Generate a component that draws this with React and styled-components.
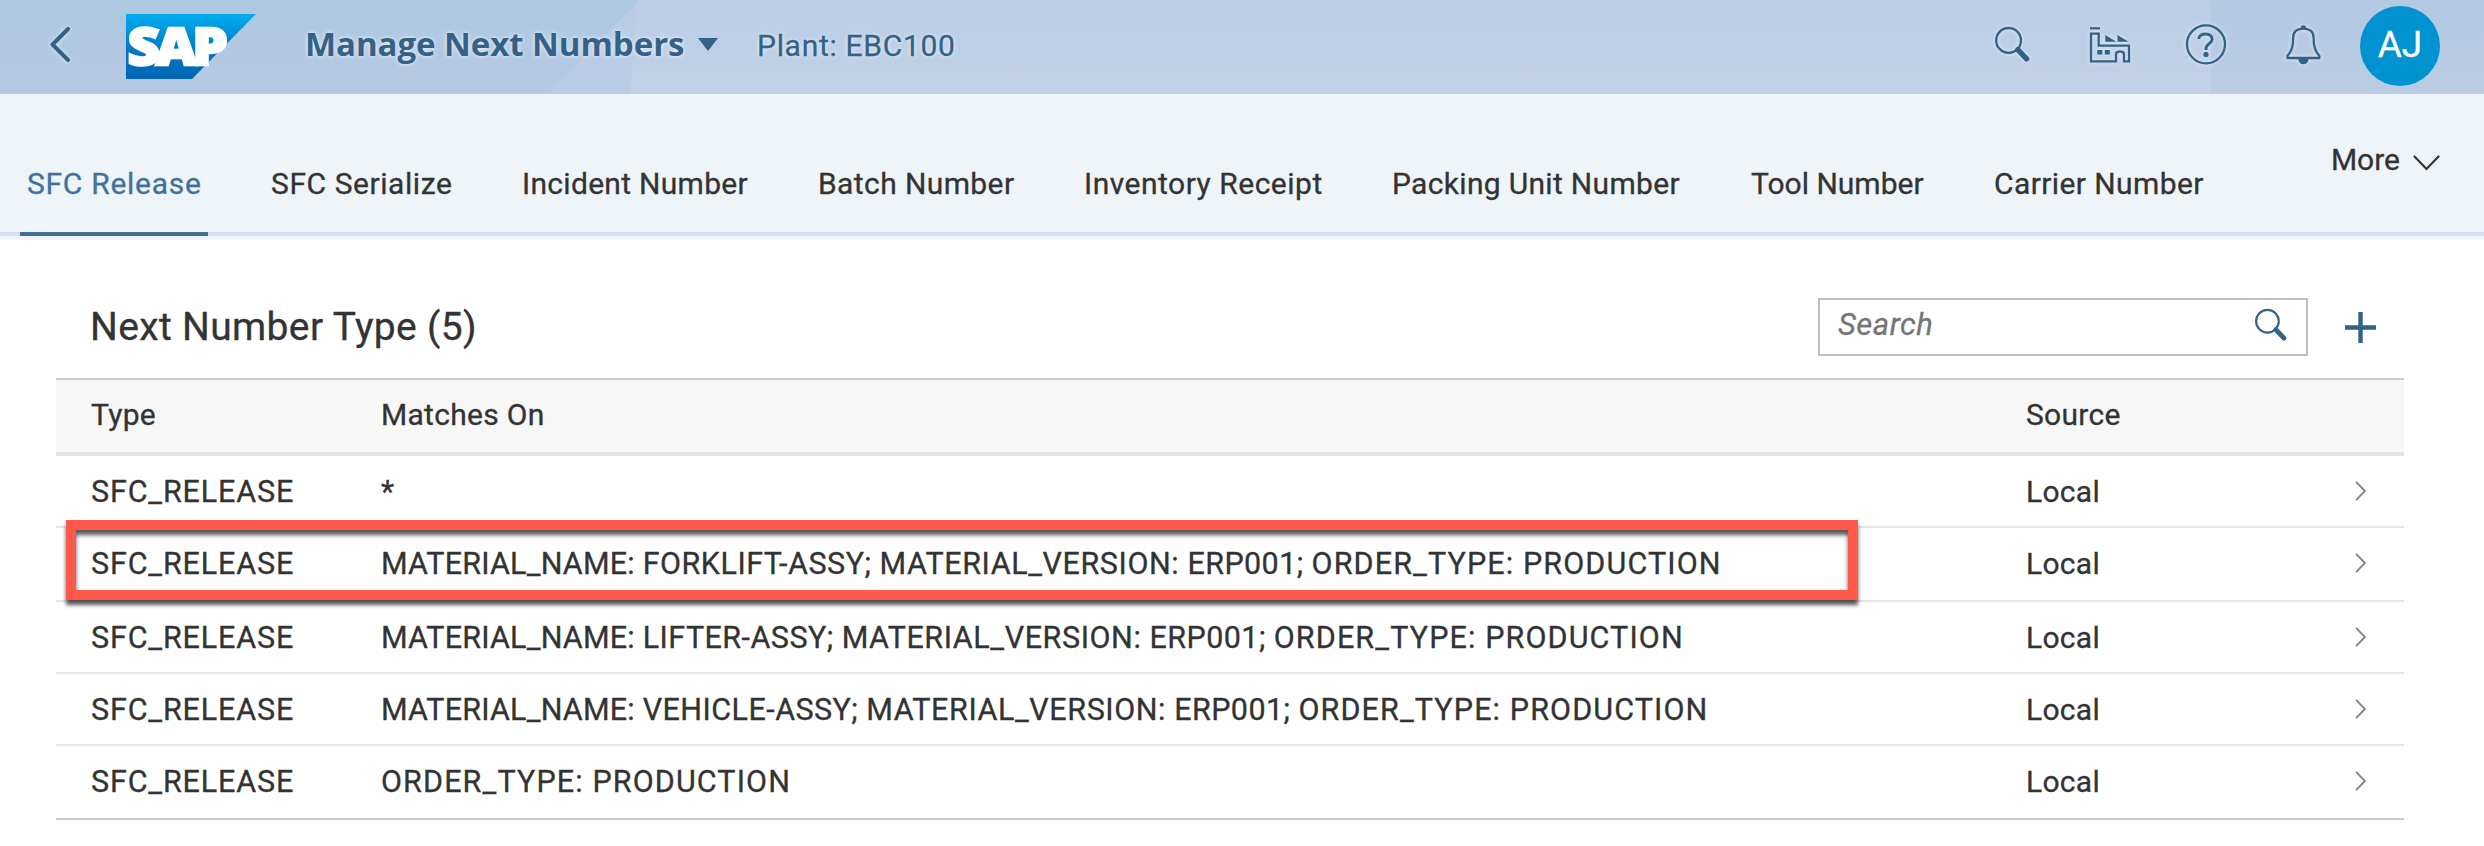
import React from "react";
import styled, { createGlobalStyle } from "styled-components";

const GlobalStyle = createGlobalStyle`
  body {
    margin: 0;
    background: #fff;
    color: #333;
    font-family: Roboto, "Liberation Sans", sans-serif;
    font-size: 30px;
    line-height: 36px;
    -webkit-text-stroke: 0.3px currentColor;
  }
  * { box-sizing: border-box; }
`;

const Page = styled.div`
  width: 2484px;
  height: 846px;
  overflow: hidden;
  display: flex;
  flex-direction: column;
`;

const ShellBar = styled.header`
  position: relative;
  isolation: isolate;
  flex: none;
  height: 94px;
  display: flex;
  align-items: flex-start;
  justify-content: space-between;
  color: #346187;
`;

const Backdrop = styled.svg`
  position: absolute;
  inset: 0;
  z-index: -1;
`;

const ShellGroup = styled.div`
  display: flex;
  align-items: flex-start;
`;

const Glyph = styled.svg`
  display: block;
  flex: none;
  overflow: visible;
  margin: ${(p) => p.$m || 0};
  fill: none;
  stroke: currentColor;
  filter: ${(p) => (p.$halo ? "drop-shadow(0 0 2px rgba(255,255,255,.7))" : "none")};
`;

const Logo = styled.svg`
  display: block;
  overflow: visible;
  margin: 14px 0 0 56px;
`;

const Heading = styled.div`
  display: flex;
  align-items: baseline;
  margin-left: 49px;
  height: 86px;
  line-height: 86px;
  text-shadow: 0 0 4px rgba(255, 255, 255, 0.9);
`;

const AppTitle = styled.h1`
  margin: 0;
  width: 393px;
  font: 700 33px/87px "Open Sans", sans-serif;
  -webkit-text-stroke: 0;
  letter-spacing: -0.05px;
  white-space: nowrap;
`;

const Caret = styled.svg`
  align-self: flex-start;
  margin-top: 38px;
`;

const Plant = styled.span`
  margin-left: 39px;
  letter-spacing: 0.7px;
`;

const Avatar = styled.div`
  width: 80px;
  height: 80px;
  margin: 6px 44px 0 39px;
  border-radius: 50%;
  background: #0092d1;
  color: #fff;
  font-size: 37px;
  line-height: 78px;
  text-align: center;
`;

const TabBar = styled.nav`
  flex: none;
  height: 146px;
  display: flex;
  justify-content: space-between;
  padding: 0 44px 0 20px;
  background: linear-gradient(#eff4f8 138px, #d3e0ef 138px, #d3e0ef 142px, #eff4f8 142px);
`;

const Tabs = styled.div`
  display: flex;
  gap: 56px;
`;

const Tab = styled.div`
  width: ${(p) => p.$w}px;
  height: 142px;
  padding: 72px 0 0 7px;
  white-space: nowrap;
  letter-spacing: ${(p) => p.$ls}px;
  color: ${(p) => (p.$active ? "#3f719c" : "#333")};
  border-bottom: 4px solid ${(p) => (p.$active ? "#3f6f9b" : "transparent")};
`;

const More = styled.div`
  display: flex;
  align-items: flex-start;
  padding-top: 48px;
`;

const Content = styled.main`
  padding: 0 80px 0 56px;
`;

const Toolbar = styled.div`
  height: 138px;
  padding: 58px 28px 22px 34px;
  display: flex;
  align-items: center;
`;

const TableTitle = styled.h2`
  margin: 0;
  flex: 1;
  font-size: 39px;
  font-weight: 400;
  line-height: 58px;
  letter-spacing: 0.35px;
`;

const SearchField = styled.div`
  width: 490px;
  height: 58px;
  display: flex;
  justify-content: space-between;
  align-items: flex-start;
  border: 2px solid #bfbfbf;
  padding: 7px 19px 0 18px;
  margin-right: 37px;
  color: #346187;
`;

const Placeholder = styled.span`
  font-style: italic;
  color: #757575;
  font-size: 31px;
  letter-spacing: 0.5px;
`;

const Table = styled.div`
  position: relative;
  border-top: 2px solid #ccc;
`;

const Row = styled.div`
  display: grid;
  grid-template-columns: 290px 1645px 1fr 38px;
  height: ${(p) => p.$h}px;
  padding: 18px 0 0 35px;
  border-bottom: 2px solid ${(p) => (p.$last ? "#ccc" : "#e5e5e5")};
`;

const HeadRow = styled(Row)`
  padding-top: 17px;
  background: #f7f7f7;
  border-bottom: 4px solid #e5e5e5;
`;

const Cell = styled.div`
  white-space: nowrap;
  letter-spacing: 0.3px;
`;

const Part = styled.span`
  font-size: 30.5px;
  letter-spacing: ${(p) => p.$ls}px;
`;

const Marker = styled.div`
  position: absolute;
  top: 140px;
  left: 10px;
  width: 1792px;
  height: 80px;
  border: 10px solid #ff594c;
  box-shadow: 0 5px 4px rgba(0, 0, 0, 0.66), inset 0 5px 4px rgba(0, 0, 0, 0.66);
`;

const TABS = [
  { label: "SFC Release", ls: 0.72, active: true },
  { label: "SFC Serialize", ls: 0.57 },
  { label: "Incident Number", ls: 0.3 },
  { label: "Batch Number", ls: 0.4 },
  { label: "Inventory Receipt", ls: 0.5 },
  { label: "Packing Unit Number", ls: 0.32 },
  { label: "Tool Number", ls: 0 },
  { label: "Carrier Number", ls: 0.4 },
];

const TAB_WIDTHS = [188, 195, 240, 210, 252, 303, 187, 220];

const NAME = ["MATERIAL_NAME: ", 0.2];
const VERSION = ["MATERIAL_VERSION: ", 0.58];
const ERP = ["ERP001; ", 0.42];
const ORDER = ["ORDER_TYPE: PRODUCTION", 1.12];
const ROWS = [
  { h: 72, parts: [["*", 0]] },
  { h: 74, parts: [NAME, ["FORKLIFT-ASSY; ", 0.5], VERSION, ERP, ORDER] },
  { h: 72, parts: [NAME, ["LIFTER-ASSY; ", 0.45], VERSION, ERP, ORDER] },
  { h: 72, parts: [NAME, ["VEHICLE-ASSY; ", 0.45], VERSION, ERP, ORDER] },
  { h: 74, parts: [ORDER] },
];

function SearchIcon({ size, ...rest }) {
  return (
    <Glyph width={size} height={size} viewBox="0 0 35 35" {...rest}>
      <circle cx="13.6" cy="13.4" r="12.4" strokeWidth="2.3" />
      <path d="M22.8 22.6L31.6 31.9" strokeWidth="5.4" strokeLinecap="round" />
    </Glyph>
  );
}

export default function App() {
  return (
    <Page>
      <GlobalStyle />
      <ShellBar>
        <Backdrop width="2484" height="94">
          <defs>
            <linearGradient id="base" x2="0" y2="1">
              <stop stopColor="#adc8e1" />
              <stop offset="1" stopColor="#b6c9e3" />
            </linearGradient>
            <linearGradient id="light" x2="0" y2="1">
              <stop stopColor="#b9cee6" />
              <stop offset="1" stopColor="#c1d1e7" />
            </linearGradient>
            <linearGradient id="right" x2="0" y2="1">
              <stop stopColor="#b3cae2" />
              <stop offset="1" stopColor="#b9cce4" />
            </linearGradient>
          </defs>
          <path fill="url(#base)" d="M0 0H700V94H0z" />
          <path fill="#b9cce5" d="M639 0L548 94H700V0z" />
          <path fill="url(#light)" d="M638 0L630 94H2211V0z" />
          <path fill="url(#right)" d="M2211 0H2484V94H2211z" />
        </Backdrop>
        <ShellGroup>
          <Glyph $halo $m="27px 0 0 50px" width="20" height="35" viewBox="0 0 20 35">
            <path d="M18 2L2.5 17.5L18 33" strokeWidth="4" strokeLinecap="round" strokeLinejoin="round" />
          </Glyph>
          <Logo width="130" height="65" viewBox="0 0 130 65">
            <defs>
              <linearGradient id="sap" x2="0" y2="1">
                <stop stopColor="#00aeef" />
                <stop offset="0.55" stopColor="#0079c6" />
                <stop offset="1" stopColor="#0066b3" />
              </linearGradient>
            </defs>
            <path fill="url(#sap)" d="M0 0H130L66 65H0z" />
            <text x="1.5" y="51" fill="#fff" stroke="#fff" strokeWidth="2.4" fontFamily="Open Sans" fontWeight="800" fontSize="52" letterSpacing="-4" textLength="96" lengthAdjust="spacingAndGlyphs">
              SAP
            </text>
          </Logo>
          <Heading>
            <AppTitle>Manage Next Numbers</AppTitle>
            <Caret width="20" height="13" viewBox="0 0 20 13">
              <path d="M0 0H20L10 13z" fill="currentColor" />
            </Caret>
            <Plant>Plant: EBC100</Plant>
          </Heading>
        </ShellGroup>
        <ShellGroup>
          <SearchIcon $halo size={35} $m="27px 60px 0 0" />
          <Glyph $halo $m="27px 56px 0 0" width="40" height="36" viewBox="0 0 40 36" strokeWidth="2.3">
            <path d="M0 1.3H10" />
            <path d="M1 34.4V6.7H8.7V18.7H39V34.4H34V27.5Q34 24.6 31 24.6H29Q26 24.6 26 27.5V34.4Z" />
            <path stroke="none" fill="currentColor" d="M15.3 8V14.8H26.3zM27.5 8V14.8H38.5zM7.3 23h5v4.6h-5zM14.8 23h5v4.6h-5z" />
          </Glyph>
          <Glyph $halo $m="24px 60px 0 0" width="40" height="40" viewBox="0 0 40 40">
            <circle cx="20" cy="20.3" r="19" strokeWidth="2.3" />
            <path d="M12.8 15C12.8 11.5 16 9.9 19.7 9.9C23.6 9.9 26.2 12 26.2 15.2C26.2 19.3 20 20 20 24.6V26" strokeWidth="3" />
            <circle cx="20" cy="30.4" r="2.6" fill="currentColor" stroke="none" />
          </Glyph>
          <Glyph $halo $m="24px 0 0 0" width="35" height="40" viewBox="0 0 35 40" strokeWidth="2.3">
            <path d="M17.4 4.6C11 4.6 7.2 7.8 7.2 13.5C7.2 23 5.6 27 1.4 32V34H33.4V32C29.2 27 27.6 23 27.6 13.5C27.6 7.8 23.8 4.6 17.4 4.6Z" strokeLinejoin="round" />
            <path d="M14.6 4.4a2.8 3.2 0 0 1 5.6 0zM12.2 35a5.2 5.2 0 0 0 10.4 0z" fill="currentColor" stroke="none" />
          </Glyph>
          <Avatar>AJ</Avatar>
        </ShellGroup>
      </ShellBar>

      <TabBar>
        <Tabs>
          {TABS.map((t, i) => (
            <Tab key={t.label} $w={TAB_WIDTHS[i]} $ls={t.ls} $active={t.active}>
              {t.label}
            </Tab>
          ))}
        </Tabs>
        <More>
          More
          <Glyph $m="13px 0 0 13px" width="27" height="16" viewBox="0 0 27 16">
            <path d="M1.5 1.5L13.5 14L25.5 1.5" strokeWidth="2.2" strokeLinecap="round" />
          </Glyph>
        </More>
      </TabBar>

      <Content>
        <Toolbar>
          <TableTitle>Next Number Type (5)</TableTitle>
          <SearchField>
            <Placeholder>Search</Placeholder>
            <SearchIcon size={32} $m="2px 0 0 0" />
          </SearchField>
          <Glyph width="31" height="31" viewBox="0 0 31 31" color="#346187">
            <path d="M15.5 0V31M0 15.5H31" strokeWidth="4.4" />
          </Glyph>
        </Toolbar>
        <Table>
          <HeadRow $h={76}>
            <Cell>Type</Cell>
            <Cell>Matches On</Cell>
            <Cell>Source</Cell>
          </HeadRow>
          {ROWS.map((r, i) => (
            <Row key={i} $h={r.h} $last={i === ROWS.length - 1}>
              <Cell>
                <Part $ls={0.85}>SFC_RELEASE</Part>
              </Cell>
              <Cell>
                {r.parts.map(([text, ls]) => (
                  <Part key={text} $ls={ls}>{text}</Part>
                ))}
              </Cell>
              <Cell>Local</Cell>
              <Glyph $m="7px 0 0 -11px" width="12" height="20" viewBox="0 0 12 20" color="#808080">
                <path d="M1 0.8L10 10L1 19.2" strokeWidth="1.8" />
              </Glyph>
            </Row>
          ))}
          <Marker />
        </Table>
      </Content>
    </Page>
  );
}
